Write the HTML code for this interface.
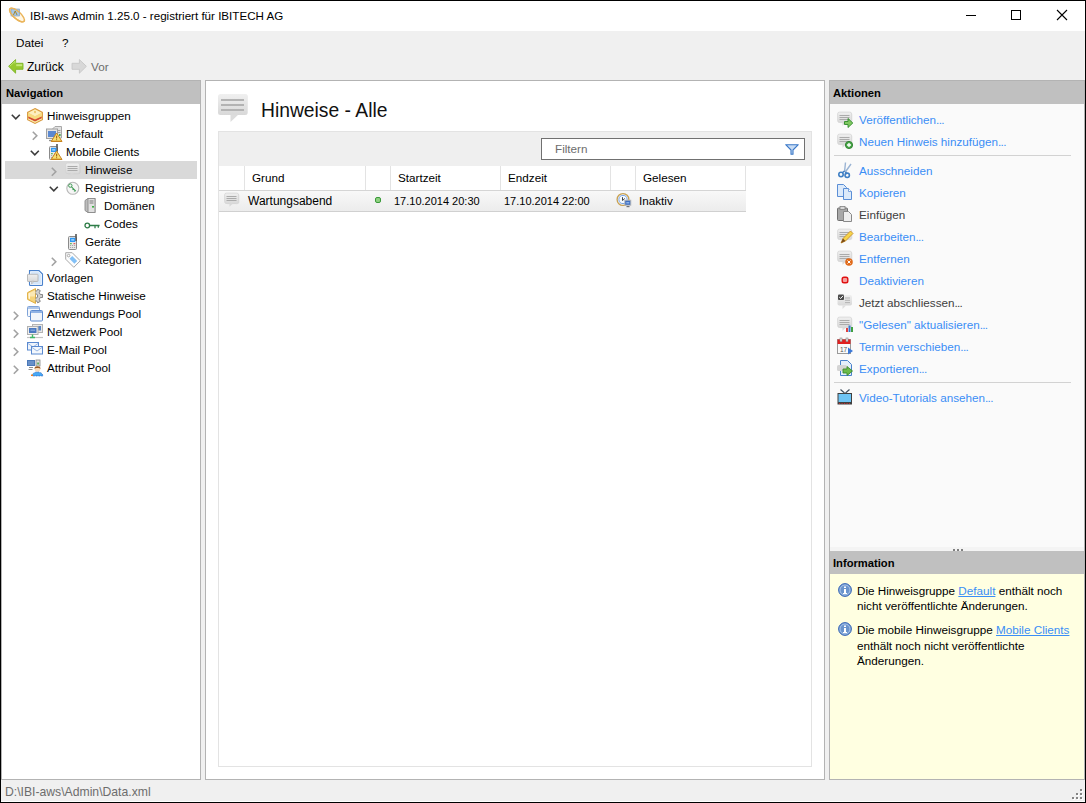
<!DOCTYPE html>
<html><head><meta charset="utf-8">
<style>
*{margin:0;padding:0;box-sizing:border-box}
html,body{width:1086px;height:803px;overflow:hidden;background:#f0f0f0;font-family:"Liberation Sans",sans-serif;font-size:12px;color:#000}
.a{position:absolute;white-space:nowrap}
.t{position:absolute;white-space:nowrap;line-height:14px;font-size:11.7px}
svg{position:absolute;overflow:visible}
.hdr{position:absolute;background:#c0c0c0;font-weight:bold;font-size:11.2px;line-height:14px;color:#000}
.lk{color:#3a8ef6}
.ln{position:absolute;background:#d5d5d5}
</style></head><body>
<svg style="left:0;top:0" width="0" height="0"><defs>
<linearGradient id="gbub" x1="0" y1="0" x2="0" y2="1"><stop offset="0" stop-color="#f0f0f0"/><stop offset="1" stop-color="#d8d8d8"/></linearGradient>
<linearGradient id="ginfo" x1="0" y1="0" x2="0" y2="1"><stop offset="0" stop-color="#a8c4ec"/><stop offset="1" stop-color="#5a86c8"/></linearGradient>
<linearGradient id="grow" x1="0" y1="0" x2="0" y2="1"><stop offset="0" stop-color="#f6f6f6"/><stop offset="1" stop-color="#e6e6e6"/></linearGradient>
</defs></svg>

<div class="a" style="left:0;top:0;width:1086px;height:803px;border:1px solid #000"></div>
<div class="a" style="left:1px;top:1px;width:1084px;height:30px;background:#fff"></div>
<svg style="left:8px;top:6px" width="18" height="18" viewBox="0 0 18 18"><ellipse cx="9" cy="9" rx="3.6" ry="9.5" transform="rotate(-48 9 9)" fill="#fff6e4" stroke="#eab45a" stroke-width="1.4"/><rect x="3" y="3" width="8.5" height="7" fill="#a8c8e8" stroke="#7898b8" stroke-width="0.6"/><path d="M5.5 9L7.2 5L9 9" stroke="#a08020" fill="none" stroke-width="0.9"/><ellipse cx="9" cy="9" rx="3.6" ry="9.5" transform="rotate(-48 9 9)" fill="none" stroke="#eab45a" stroke-width="1.4" stroke-dasharray="0 9 40"/></svg>
<div class="t" style="left:30px;top:9px;font-size:11.6px">IBI-aws Admin 1.25.0 - registriert für IBITECH AG</div>
<div class="a" style="left:966px;top:15px;width:10px;height:1px;background:#000"></div>
<div class="a" style="left:1011px;top:10px;width:10px;height:10px;border:1px solid #000"></div>
<svg style="left:1057px;top:10px" width="10" height="10" viewBox="0 0 10 10"><path d="M0 0L10 10M10 0L0 10" stroke="#000" stroke-width="1.1"/></svg>
<div class="t" style="left:16px;top:36px;">Datei</div>
<div class="t" style="left:62px;top:36px;">?</div>
<svg style="left:8px;top:59px" width="16" height="16" viewBox="0 0 16 16"><path d="M0.6 7.3L7.6 0.6V4.3H15V10.3H7.6V14.2Z" fill="#96c82e" stroke="#7cb424" stroke-width="0.9" stroke-linejoin="round"/><path d="M8.2 5.2H14.2V7.2H8.2Z" fill="#c4e878"/><path d="M1.8 7.3L7 2.3V4.5" fill="none" stroke="#c8ec80" stroke-width="0.8"/></svg>
<div class="t" style="left:27px;top:60px;font-size:12px">Zurück</div>
<svg style="left:71px;top:59px" width="16" height="16" viewBox="0 0 16 16"><path d="M15.4 7.3L8.4 0.6V4.3H1V10.3H8.4V14.2Z" fill="#d8d8d8" stroke="#c6c6c6" stroke-width="0.9" stroke-linejoin="round"/></svg>
<div class="t" style="left:91px;top:60px;color:#6d6d6d">Vor</div>
<div class="a" style="left:1px;top:80px;width:200px;height:700px;background:#fff;border:1px solid #b3b3b3"></div>
<div class="hdr" style="left:2px;top:81px;width:198px;height:23px;padding:5px 0 0 4px">Navigation</div>
<svg style="left:11px;top:114px" width="10" height="6" viewBox="0 0 10 6"><path d="M0.8 0.8L4.8 4.8L8.8 0.8" fill="none" stroke="#3c3c3c" stroke-width="1.6"/></svg>
<svg style="left:27px;top:108px" width="16" height="16" viewBox="0 0 16 16"><path d="M8 0.6L15.4 4.4L15.4 11.6L8 15.4L0.6 11.6L0.6 4.4Z" fill="#f6d67a" stroke="#d89a40" stroke-width="1.1"/><path d="M8 1.5L14.6 4.8L8 8.2L1.4 4.8Z" fill="#fdf0c0"/><path d="M1.3 4.9L8 8.3L14.7 4.9L14.7 8.2L8 11.4L1.3 8.2Z" fill="#f7dc80"/><path d="M1.3 8.4L8 11.6L14.7 8.4L14.7 10.3L8 13.5L1.3 10.3Z" fill="#d24a32"/><path d="M1.3 10.5L8 13.7L14.7 10.5L14.7 11.4L8 14.8L1.3 11.4Z" fill="#fbe9b0"/><path d="M8 2.5L9 4L8 5.5L7 4Z" fill="#e8b848"/></svg>
<div class="t" style="left:47px;top:109px;">Hinweisgruppen</div>
<svg style="left:32px;top:131px" width="6" height="10" viewBox="0 0 6 10"><path d="M0.8 0.8L4.8 4.8L0.8 8.8" fill="none" stroke="#a2a2a2" stroke-width="1.6"/></svg>
<svg style="left:46px;top:126px" width="16" height="16" viewBox="0 0 16 16"><path d="M6.5 3L9 0.5H15.5V12H6.5Z" fill="#e2e2e2" stroke="#a8a8a8" stroke-width="1"/><path d="M11.5 4.5h3M11.5 6.5h3" stroke="#9a9a9a" stroke-width="0.9"/><rect x="12.8" y="8" width="2" height="2" rx="1" fill="#3aa040"/><rect x="0.5" y="3" width="11" height="9.5" fill="#e4e4e4" stroke="#a0a0a0"/><rect x="2" y="5" width="8" height="6" fill="#5b88d0"/><path d="M3 14.5h3" stroke="#909090" stroke-width="1.3"/><path d="M10.6 7L16 15.5L5.2 15.5Z" fill="#f8e070" stroke="#c8841e" stroke-width="1" stroke-linejoin="round"/><path d="M5.5 15.3H15.8" stroke="#c8841e" stroke-width="1.2"/><path d="M10.6 9.8v2.6" stroke="#a86818" stroke-width="1.2"/><rect x="10.1" y="13.2" width="1" height="1" fill="#a86818"/></svg>
<div class="t" style="left:66px;top:127px;">Default</div>
<svg style="left:30px;top:150px" width="10" height="6" viewBox="0 0 10 6"><path d="M0.8 0.8L4.8 4.8L8.8 0.8" fill="none" stroke="#3c3c3c" stroke-width="1.6"/></svg>
<svg style="left:46px;top:144px" width="16" height="16" viewBox="0 0 16 16"><rect x="3.5" y="2.5" width="8" height="13" rx="1" fill="#e8e8e8" stroke="#8a8a8a"/><path d="M11 0v7" stroke="#555" stroke-width="1.6"/><rect x="5" y="3.8" width="5.3" height="4.2" fill="#2e98f4"/><rect x="6.2" y="5.2" width="3" height="1.4" fill="#a8d8ff"/><rect x="5" y="9.2" width="1.8" height="1" fill="#40b040"/><rect x="8.5" y="9.2" width="1.8" height="1" fill="#e04040"/><path d="M5 11.5h5.3M5 13.5h5.3" stroke="#a8a8a8" stroke-width="1" stroke-dasharray="1.2 0.8"/><path d="M10.6 7L16 15.5L5.2 15.5Z" fill="#f8e070" stroke="#c8841e" stroke-width="1" stroke-linejoin="round"/><path d="M5.5 15.3H15.8" stroke="#c8841e" stroke-width="1.2"/><path d="M10.6 9.8v2.6" stroke="#a86818" stroke-width="1.2"/><rect x="10.1" y="13.2" width="1" height="1" fill="#a86818"/></svg>
<div class="t" style="left:66px;top:145px;">Mobile Clients</div>
<div class="a" style="left:5px;top:161px;width:192px;height:18px;background:#d9d9d9"></div>
<svg style="left:51px;top:167px" width="6" height="10" viewBox="0 0 6 10"><path d="M0.8 0.8L4.8 4.8L0.8 8.8" fill="none" stroke="#a2a2a2" stroke-width="1.6"/></svg>
<svg style="left:65px;top:162px" width="16" height="16" viewBox="0 0 16 16"><rect x="1.4" y="1.9" width="14" height="10.4" rx="1.8" fill="#000" opacity="0.05"/><rect x="0.6" y="1.1" width="14" height="10.4" rx="1.8" fill="url(#gbub)" stroke="#d2d2d2" stroke-width="0.7"/><path d="M5.5 11.3L5.5 14.8L9 11.3Z" fill="#d8d8d8"/><path d="M2.5 4.5h10M2.5 6.5h10M2.5 8.5h10" stroke="#ababab" stroke-width="1"/></svg>
<div class="t" style="left:85px;top:163px;">Hinweise</div>
<svg style="left:49px;top:186px" width="10" height="6" viewBox="0 0 10 6"><path d="M0.8 0.8L4.8 4.8L8.8 0.8" fill="none" stroke="#3c3c3c" stroke-width="1.6"/></svg>
<svg style="left:65px;top:180px" width="16" height="16" viewBox="0 0 16 16"><circle cx="7.8" cy="8.3" r="6" fill="#f6f6f6" stroke="#b8b8b8" stroke-width="1.1"/><circle cx="5.3" cy="5.6" r="1.7" fill="none" stroke="#3f9a55" stroke-width="1"/><path d="M6.5 6.8L10.8 11.1M8.6 8.9L7.6 9.9M10 10.3L9 11.3" stroke="#3f9a55" stroke-width="1.1"/></svg>
<div class="t" style="left:85px;top:181px;">Registrierung</div>
<svg style="left:84px;top:198px" width="16" height="16" viewBox="0 0 16 16"><path d="M1 2.5L4 0.5L11 0.5L11 14.5L4 14.5L1 12.5Z" fill="#bdbdbd" stroke="#8a8a8a" stroke-width="0.9"/><rect x="4" y="0.5" width="7" height="14" fill="#e0e0e0" stroke="#8a8a8a" stroke-width="0.9"/><path d="M5.5 3h4M5.5 5h4" stroke="#7a7a7a" stroke-width="1"/><rect x="8" y="8" width="2" height="1.6" fill="#3cb040"/></svg>
<div class="t" style="left:104px;top:199px;">Domänen</div>
<svg style="left:84px;top:216px" width="16" height="16" viewBox="0 0 16 16"><circle cx="3.3" cy="9.5" r="2.3" fill="none" stroke="#2f7d48" stroke-width="1.3"/><path d="M5.6 9.5h10M11 9.5v2.8M14.3 9.5v2.3" stroke="#2f7d48" stroke-width="1.3"/></svg>
<div class="t" style="left:104px;top:217px;">Codes</div>
<svg style="left:65px;top:234px" width="16" height="16" viewBox="0 0 16 16"><rect x="3.5" y="2.5" width="8" height="13" rx="1" fill="#e8e8e8" stroke="#8a8a8a"/><path d="M11 0v7" stroke="#555" stroke-width="1.6"/><rect x="5" y="3.8" width="5.3" height="4.2" fill="#2e98f4"/><rect x="6.2" y="5.2" width="3" height="1.4" fill="#a8d8ff"/><rect x="5" y="9.2" width="1.8" height="1" fill="#40b040"/><rect x="8.5" y="9.2" width="1.8" height="1" fill="#e04040"/><path d="M5 11.5h5.3M5 13.5h5.3" stroke="#a8a8a8" stroke-width="1" stroke-dasharray="1.2 0.8"/></svg>
<div class="t" style="left:85px;top:235px;">Geräte</div>
<svg style="left:51px;top:257px" width="6" height="10" viewBox="0 0 6 10"><path d="M0.8 0.8L4.8 4.8L0.8 8.8" fill="none" stroke="#a2a2a2" stroke-width="1.6"/></svg>
<svg style="left:65px;top:252px" width="16" height="16" viewBox="0 0 16 16"><path d="M0.7 0.7H7.2L15.3 8.8L8.8 15.3L0.7 7.2Z" fill="#fdfdfd" stroke="#a8a8a8" stroke-width="1"/><path d="M4.5 6.8L7.3 4L12.2 8.9L9.4 11.7Z" fill="#82c0f6"/><circle cx="3.6" cy="3.6" r="1.3" fill="#fff" stroke="#a0a0a0" stroke-width="0.9"/></svg>
<div class="t" style="left:85px;top:253px;">Kategorien</div>
<svg style="left:27px;top:270px" width="16" height="16" viewBox="0 0 16 16"><path d="M2.5 0.6h9.5l3.5 3.5v10.3a1 1 0 0 1-1 1h-11a1 1 0 0 1-1-1Z" fill="#d4e6fa" stroke="#4a82cc" stroke-width="1.1"/><path d="M3.6 1.7h8l2.8 2.8v10H3.6Z" fill="none" stroke="#f4f8fe" stroke-width="0.8"/><rect x="0.5" y="4.3" width="10.5" height="7.2" rx="0.6" fill="url(#gbub)" stroke="#b4b4b4" stroke-width="0.9"/><path d="M4.6 11.2v2.9l2.6-2.9Z" fill="#dcdcdc" stroke="#b4b4b4" stroke-width="0.6"/></svg>
<div class="t" style="left:47px;top:271px;">Vorlagen</div>
<svg style="left:27px;top:288px" width="16" height="16" viewBox="0 0 16 16"><path d="M0.6 4.6L8.5 0.6L8.5 15.4L0.6 11.4Z" fill="#f6d47c" stroke="#e0ae40" stroke-width="1"/><path d="M1.6 5.2L8 2.2L8 8.5L1.6 8.5Z" fill="#fbe8b4"/><path d="M1.6 5.5L3 5L3 11L1.6 10.6Z" fill="#fff6dc"/><clipPath id="gclip"><rect x="8.5" y="0" width="8" height="16"/></clipPath><path clip-path="url(#gclip)" fill-rule="evenodd" d="M13.26 6.45L15.54 6.50L15.54 9.50L13.26 9.55L12.22 11.35L13.32 13.35L10.72 14.85L9.54 12.89L7.46 12.89L6.28 14.85L3.68 13.35L4.78 11.35L3.74 9.55L1.46 9.50L1.46 6.50L3.74 6.45L4.78 4.65L3.68 2.65L6.28 1.15L7.46 3.11L9.54 3.11L10.72 1.15L13.32 2.65L12.22 4.65ZM10.7 8.0A2.2 2.2 0 1 0 6.3 8.0A2.2 2.2 0 1 0 10.7 8.0Z" fill="#d0d0d0" stroke="#7a7a7a" stroke-width="0.9"/></svg>
<div class="t" style="left:47px;top:289px;">Statische Hinweise</div>
<svg style="left:13px;top:311px" width="6" height="10" viewBox="0 0 6 10"><path d="M0.8 0.8L4.8 4.8L0.8 8.8" fill="none" stroke="#a2a2a2" stroke-width="1.6"/></svg>
<svg style="left:27px;top:306px" width="16" height="16" viewBox="0 0 16 16"><rect x="0.5" y="0.5" width="12" height="10" rx="1" fill="#f4f7fc" stroke="#7ea3d8" stroke-width="1"/><rect x="1" y="1" width="11" height="2" fill="#aec6ea"/><rect x="3.5" y="4.5" width="12" height="10.5" rx="1" fill="#f0f4fa" stroke="#5d8bd0" stroke-width="1"/><rect x="4" y="5" width="11" height="2" fill="#90b2e4"/></svg>
<div class="t" style="left:47px;top:307px;">Anwendungs Pool</div>
<svg style="left:13px;top:329px" width="6" height="10" viewBox="0 0 6 10"><path d="M0.8 0.8L4.8 4.8L0.8 8.8" fill="none" stroke="#a2a2a2" stroke-width="1.6"/></svg>
<svg style="left:27px;top:324px" width="16" height="16" viewBox="0 0 16 16"><rect x="5.5" y="0.5" width="10" height="8" fill="#e8e8e8" stroke="#b4b4b4"/><rect x="8.5" y="2" width="5.5" height="4.5" fill="#5a86c6"/><rect x="0.5" y="2.5" width="10.5" height="8" fill="#eeeeee" stroke="#b0b0b0"/><rect x="2" y="4" width="7.5" height="5" fill="#4a78c0"/><rect x="3.5" y="5.5" width="4.5" height="1.5" fill="#7aa0d8"/><path d="M0 13.5h16" stroke="#c4c4c4" stroke-width="1.2"/><path d="M5.5 10.5v3M3 13.5h5" stroke="#40b868" stroke-width="1.4"/></svg>
<div class="t" style="left:47px;top:325px;">Netzwerk Pool</div>
<svg style="left:13px;top:347px" width="6" height="10" viewBox="0 0 6 10"><path d="M0.8 0.8L4.8 4.8L0.8 8.8" fill="none" stroke="#a2a2a2" stroke-width="1.6"/></svg>
<svg style="left:27px;top:342px" width="16" height="16" viewBox="0 0 16 16"><rect x="0.5" y="0.5" width="11" height="7.5" fill="#f0f5fc" stroke="#5b8ad0"/><path d="M1 1.5L6 5L11 1.5" fill="none" stroke="#9ab8e4"/><rect x="4.5" y="4.5" width="11" height="7.5" fill="#f4f8fd" stroke="#5b8ad0"/><path d="M5 5.5L10 9L15 5.5" fill="none" stroke="#9ab8e4"/></svg>
<div class="t" style="left:47px;top:343px;">E-Mail Pool</div>
<svg style="left:13px;top:365px" width="6" height="10" viewBox="0 0 6 10"><path d="M0.8 0.8L4.8 4.8L0.8 8.8" fill="none" stroke="#a2a2a2" stroke-width="1.6"/></svg>
<svg style="left:27px;top:360px" width="16" height="16" viewBox="0 0 16 16"><rect x="0" y="0" width="8" height="6" fill="#4a78b8"/><rect x="1" y="1" width="6" height="4" fill="#6890c8"/><path d="M2 7.5h4M1.5 9.5h4" stroke="#909090" stroke-width="1"/><rect x="9" y="0" width="4" height="6" fill="#e0e0e0" stroke="#888" stroke-width="0.8"/><rect x="10.3" y="2.5" width="1.5" height="2" fill="#40a040"/><circle cx="10.5" cy="9" r="2.8" fill="#fcdcb8"/><path d="M7.4 8.8C7.2 5.5 13.8 5.5 13.6 8.8C12.5 7.6 8.5 7.6 7.4 8.8Z" fill="#9a5a22"/><path d="M5 16C5.3 13.5 7.5 12 10.5 12C13.5 12 15.7 13.5 16 16Z" fill="#48a8f4" stroke="#2050b0" stroke-width="0.7" stroke-dasharray="0.8 0.8"/><rect x="4" y="14.5" width="2" height="1.5" fill="#f08020"/></svg>
<div class="t" style="left:47px;top:361px;">Attribut Pool</div>
<div class="a" style="left:205px;top:80px;width:620px;height:700px;background:#fff;border:1px solid #b3b3b3"></div>
<svg style="left:218px;top:93px" width="32" height="32" viewBox="0 0 32 32"><rect x="1" y="1" width="29" height="21" rx="3" fill="#000" opacity="0.06"/><rect x="0" y="1" width="29.5" height="21" rx="2.5" fill="url(#gbub)"/><path d="M12.5 21.5L12.5 29L20.5 21.5Z" fill="#dcdcdc"/><path d="M3 7h23M3 12h23M3 17h23" stroke="#b3b3b3" stroke-width="2"/></svg>
<div class="t" style="left:261px;top:100px;font-size:19.3px;line-height:22px;color:#111">Hinweise - Alle</div>
<div class="a" style="left:218px;top:131px;width:594px;height:636px;border:1px solid #e3e3e3;background:#fff"></div>
<div class="a" style="left:219px;top:132px;width:592px;height:34px;background:#efefef"></div>
<div class="a" style="left:541px;top:138px;width:264px;height:22px;border:1px solid #707070;background:#fff"></div>
<div class="t" style="left:555px;top:142px;color:#6d6d6d">Filtern</div>
<svg style="left:785px;top:144px" width="14" height="11" viewBox="0 0 14 11"><path d="M0.7 0.7H13.3L8 6V10.3H6V6Z" fill="#c8dcf4" stroke="#3a78c8" stroke-width="1.1" stroke-linejoin="round"/></svg>
<div class="a" style="left:219px;top:166px;width:527px;height:25px;background:#fff;border-bottom:1px solid #d5d5d5"></div>
<div class="ln" style="left:244px;top:166px;width:1px;height:24px;background:#e3e3e3"></div>
<div class="ln" style="left:365px;top:166px;width:1px;height:24px;background:#e3e3e3"></div>
<div class="ln" style="left:390px;top:166px;width:1px;height:24px;background:#e3e3e3"></div>
<div class="ln" style="left:500px;top:166px;width:1px;height:24px;background:#e3e3e3"></div>
<div class="ln" style="left:610px;top:166px;width:1px;height:24px;background:#e3e3e3"></div>
<div class="ln" style="left:635px;top:166px;width:1px;height:24px;background:#e3e3e3"></div>
<div class="ln" style="left:745px;top:166px;width:1px;height:24px;background:#e3e3e3"></div>
<div class="t" style="left:252px;top:171px;">Grund</div>
<div class="t" style="left:398px;top:171px;">Startzeit</div>
<div class="t" style="left:508px;top:171px;">Endzeit</div>
<div class="t" style="left:643px;top:171px;">Gelesen</div>
<div class="a" style="left:219px;top:191px;width:527px;height:21px;background:linear-gradient(#f8f8f8,#ececec);border-bottom:1px solid #d0d0d0"></div>
<svg style="left:224px;top:192px" width="16" height="16" viewBox="0 0 16 16"><rect x="1.4" y="1.9" width="14" height="10.4" rx="1.8" fill="#000" opacity="0.05"/><rect x="0.6" y="1.1" width="14" height="10.4" rx="1.8" fill="url(#gbub)" stroke="#d2d2d2" stroke-width="0.7"/><path d="M5.5 11.3L5.5 14.8L9 11.3Z" fill="#d8d8d8"/><path d="M2.5 4.5h10M2.5 6.5h10M2.5 8.5h10" stroke="#ababab" stroke-width="1"/></svg>
<div class="a" style="left:375px;top:197px;width:6px;height:6px;border-radius:2px;background:#8ed080;border:1px solid #3a9a3a"></div>
<div class="t" style="left:248px;top:194px;font-size:12px">Wartungsabend</div>
<div class="t" style="left:394px;top:194px;font-size:11px">17.10.2014 20:30</div>
<div class="t" style="left:504px;top:194px;font-size:11px">17.10.2014 22:00</div>
<svg style="left:616px;top:193px" width="16" height="16" viewBox="0 0 16 16"><circle cx="7" cy="6.5" r="5.9" fill="#fafcff" stroke="#c8a050" stroke-width="1.3"/><circle cx="7" cy="6.5" r="4.1" fill="#f4faff" stroke="#6a98e0" stroke-width="0.9"/><path d="M6.5 4.2v3.3l2.3-2" fill="none" stroke="#404040" stroke-width="1"/><rect x="8.8" y="7.2" width="6" height="5" fill="#3f6fc0" stroke="#b8b8b8" stroke-width="0.9"/><rect x="10.3" y="9" width="3" height="1.5" fill="#8ab0e8"/><path d="M10.5 13.6h3" stroke="#707070" stroke-width="1.2"/></svg>
<div class="t" style="left:639px;top:194px;">Inaktiv</div>
<div class="a" style="left:829px;top:80px;width:256px;height:700px;background:#fafafa;border:1px solid #b3b3b3"></div>
<div class="hdr" style="left:830px;top:81px;width:254px;height:23px;padding:5px 0 0 3px">Aktionen</div>
<svg style="left:837px;top:111px" width="16" height="16" viewBox="0 0 16 16"><rect x="1.4" y="1.9" width="14" height="10.4" rx="1.8" fill="#000" opacity="0.05"/><rect x="0.6" y="1.1" width="14" height="10.4" rx="1.8" fill="url(#gbub)" stroke="#d2d2d2" stroke-width="0.7"/><path d="M5.5 11.3L5.5 14.8L9 11.3Z" fill="#d8d8d8"/><path d="M2.5 4.5h10M2.5 6.5h10M2.5 8.5h10" stroke="#ababab" stroke-width="1"/><path d="M7.5 10.5h3.5V7.5L15.8 12l-4.8 4.5v-3H7.5Z" fill="#80c860" stroke="#2e8a2a" stroke-width="0.9" stroke-linejoin="round"/></svg>
<div class="t" style="left:859px;top:113px;color:#3a8ef6">Veröffentlichen<span style="letter-spacing:-0.7px">...</span></div>
<svg style="left:837px;top:133px" width="16" height="16" viewBox="0 0 16 16"><rect x="1.4" y="1.9" width="14" height="10.4" rx="1.8" fill="#000" opacity="0.05"/><rect x="0.6" y="1.1" width="14" height="10.4" rx="1.8" fill="url(#gbub)" stroke="#d2d2d2" stroke-width="0.7"/><path d="M5.5 11.3L5.5 14.8L9 11.3Z" fill="#d8d8d8"/><path d="M2.5 4.5h10M2.5 6.5h10M2.5 8.5h10" stroke="#ababab" stroke-width="1"/><circle cx="12" cy="12" r="3.6" fill="#4aaa4a" stroke="#2a7a2a" stroke-width="0.9"/><path d="M12 10v4M10 12h4" stroke="#fff" stroke-width="1.3"/></svg>
<div class="t" style="left:859px;top:135px;color:#3a8ef6">Neuen Hinweis hinzufügen<span style="letter-spacing:-0.7px">...</span></div>
<svg style="left:837px;top:162px" width="16" height="16" viewBox="0 0 16 16"><path d="M8.5 0.5L7.5 10M14 2L8 10.5" stroke="#9ab4d4" stroke-width="1.4"/><path d="M7.5 9L5 11M8.5 10L10 12" stroke="#3f7fc4" stroke-width="1.5"/><circle cx="4" cy="12.5" r="2.2" fill="none" stroke="#3f7fc4" stroke-width="1.6"/><circle cx="10.2" cy="13.3" r="2.2" fill="none" stroke="#3f7fc4" stroke-width="1.6"/></svg>
<div class="t" style="left:859px;top:164px;color:#3a8ef6">Ausschneiden</div>
<svg style="left:837px;top:184px" width="16" height="16" viewBox="0 0 16 16"><path d="M0.5 0.5h6l3 3v9h-9Z" fill="#dceafa" stroke="#5a8ed6"/><path d="M6.5 4.5h5l3 3v8h-8Z" fill="#dceafa" stroke="#5a8ed6"/><path d="M11.5 4.5v3h3" fill="#fff" stroke="#5a8ed6" stroke-width="0.8"/></svg>
<div class="t" style="left:859px;top:186px;color:#3a8ef6">Kopieren</div>
<svg style="left:837px;top:206px" width="16" height="16" viewBox="0 0 16 16"><rect x="0.5" y="2" width="10" height="12.5" rx="1" fill="#a8a8a8" stroke="#707070"/><rect x="3" y="0.5" width="5" height="3" fill="#d8d8d8" stroke="#808080" stroke-width="0.8"/><path d="M6.5 5.5h5l3 3v7h-8Z" fill="#eeeeee" stroke="#888"/></svg>
<div class="t" style="left:859px;top:208px;color:#404040">Einfügen</div>
<svg style="left:837px;top:228px" width="16" height="16" viewBox="0 0 16 16"><rect x="1.4" y="1.9" width="14" height="10.4" rx="1.8" fill="#000" opacity="0.05"/><rect x="0.6" y="1.1" width="14" height="10.4" rx="1.8" fill="url(#gbub)" stroke="#d2d2d2" stroke-width="0.7"/><path d="M5.5 11.3L5.5 14.8L9 11.3Z" fill="#d8d8d8"/><path d="M2.5 4.5h10M2.5 6.5h10M2.5 8.5h10" stroke="#ababab" stroke-width="1"/><path d="M4 15L6 10.5L13.5 3L16 5.5L8.5 13Z" fill="#f6d44a" stroke="#c8902a" stroke-width="0.9"/><path d="M4 15L6 10.5L8.5 13Z" fill="#7a4a1a"/></svg>
<div class="t" style="left:859px;top:230px;color:#3a8ef6">Bearbeiten<span style="letter-spacing:-0.7px">...</span></div>
<svg style="left:837px;top:250px" width="16" height="16" viewBox="0 0 16 16"><rect x="1.4" y="1.9" width="14" height="10.4" rx="1.8" fill="#000" opacity="0.05"/><rect x="0.6" y="1.1" width="14" height="10.4" rx="1.8" fill="url(#gbub)" stroke="#d2d2d2" stroke-width="0.7"/><path d="M5.5 11.3L5.5 14.8L9 11.3Z" fill="#d8d8d8"/><path d="M2.5 4.5h10M2.5 6.5h10M2.5 8.5h10" stroke="#ababab" stroke-width="1"/><circle cx="12" cy="12" r="3.8" fill="#e06a1a"/><path d="M10.5 10.5l3 3M13.5 10.5l-3 3" stroke="#fff" stroke-width="1"/></svg>
<div class="t" style="left:859px;top:252px;color:#3a8ef6">Entfernen</div>
<svg style="left:837px;top:272px" width="16" height="16" viewBox="0 0 16 16"><rect x="5.2" y="5.2" width="5.6" height="5.6" rx="1.8" fill="#f4a0a0" stroke="#e01010" stroke-width="1.4"/></svg>
<div class="t" style="left:859px;top:274px;color:#3a8ef6">Deaktivieren</div>
<svg style="left:837px;top:294px" width="16" height="16" viewBox="0 0 16 16"><rect x="0.5" y="1" width="14.5" height="10.5" rx="1.8" fill="url(#gbub)"/><path d="M5.5 11.5L5.5 15L9 11.5Z" fill="#dedede"/><path d="M8 4h5M8 6.3h5M8 8.6h5" stroke="#b3b3b3" stroke-width="1"/><rect x="1" y="0.5" width="6" height="5.5" rx="1" fill="#4a4a4a"/><path d="M2.3 3.2L3.7 4.5L6 1.8" fill="none" stroke="#fff" stroke-width="1"/></svg>
<div class="t" style="left:859px;top:296px;color:#404040">Jetzt abschliessen<span style="letter-spacing:-0.7px">...</span></div>
<svg style="left:837px;top:316px" width="16" height="16" viewBox="0 0 16 16"><rect x="1.4" y="1.9" width="14" height="10.4" rx="1.8" fill="#000" opacity="0.05"/><rect x="0.6" y="1.1" width="14" height="10.4" rx="1.8" fill="url(#gbub)" stroke="#d2d2d2" stroke-width="0.7"/><path d="M5.5 11.3L5.5 14.8L9 11.3Z" fill="#d8d8d8"/><path d="M2.5 4.5h10M2.5 6.5h10M2.5 8.5h10" stroke="#ababab" stroke-width="1"/><rect x="9" y="12" width="2" height="4" fill="#e04040"/><rect x="11.5" y="9.5" width="2" height="6.5" fill="#3a7ad0"/><rect x="14" y="11" width="2" height="5" fill="#40a040"/></svg>
<div class="t" style="left:859px;top:318px;color:#3a8ef6">"Gelesen" aktualisieren<span style="letter-spacing:-0.7px">...</span></div>
<svg style="left:837px;top:338px" width="16" height="16" viewBox="0 0 16 16"><rect x="0.5" y="1.5" width="13" height="14" fill="#fafafa" stroke="#9a9a9a"/><rect x="0.5" y="1.5" width="13" height="4.5" fill="#e02020"/><rect x="3" y="0" width="2" height="3.5" fill="#e8e8e8" stroke="#888" stroke-width="0.6"/><rect x="9" y="0" width="2" height="3.5" fill="#e8e8e8" stroke="#888" stroke-width="0.6"/><text x="3" y="13.5" font-size="6.5" font-family="Liberation Sans" fill="#555">17</text><path d="M11 9.5L16 13L11 16.5Z" fill="#3a78d8"/></svg>
<div class="t" style="left:859px;top:340px;color:#3a8ef6">Termin verschieben<span style="letter-spacing:-0.7px">...</span></div>
<svg style="left:837px;top:360px" width="16" height="16" viewBox="0 0 16 16"><path d="M3.5 0.5h7l4 4v11h-11Z" fill="#e4eefa" stroke="#4a82cc"/><rect x="0" y="5" width="10" height="6" rx="1.5" fill="#d4d4d4"/><path d="M6 9h4V6.5L15.5 11 10 15.5V13H6Z" fill="#6cba4a" stroke="#3a8a2a" stroke-width="0.9"/></svg>
<div class="t" style="left:859px;top:362px;color:#3a8ef6">Exportieren<span style="letter-spacing:-0.7px">...</span></div>
<svg style="left:837px;top:389px" width="16" height="16" viewBox="0 0 16 16"><path d="M3.5 0.5L7.5 4M12.5 0.5L8.5 4" stroke="#405060" stroke-width="1.2"/><rect x="0.5" y="4" width="14.5" height="11.5" fill="#404040"/><rect x="1.5" y="5" width="12.5" height="8" fill="#6ec4f4"/><path d="M2 14.5h11" stroke="#c03030" stroke-width="1" stroke-dasharray="1.2 1.3"/></svg>
<div class="t" style="left:859px;top:391px;color:#3a8ef6">Video-Tutorials ansehen<span style="letter-spacing:-0.7px">...</span></div>
<div class="ln" style="left:834px;top:155px;width:237px;height:1px;background:#d2d2d2"></div>
<div class="ln" style="left:834px;top:382px;width:237px;height:1px;background:#d2d2d2"></div>
<div class="a" style="left:830px;top:547px;width:254px;height:4px;background:#f4f4f4"></div>
<div class="a" style="left:953px;top:549px;width:2px;height:2px;background:#808080"></div>
<div class="a" style="left:957px;top:549px;width:2px;height:2px;background:#808080"></div>
<div class="a" style="left:961px;top:549px;width:2px;height:2px;background:#808080"></div>
<div class="hdr" style="left:830px;top:551px;width:254px;height:23px;padding:5px 0 0 3px">Information</div>
<div class="a" style="left:830px;top:574px;width:254px;height:205px;background:#ffffe1"></div>
<svg style="left:838px;top:583px" width="15" height="15" viewBox="0 0 15 15"><circle cx="7" cy="7" r="6.4" fill="#6a94cc" stroke="#3a68b8" stroke-width="1"/><circle cx="7" cy="7" r="5" fill="none" stroke="#b0caec" stroke-width="0.9"/><rect x="6" y="3.5" width="2" height="1.5" fill="#fff"/><path d="M6 6h2v4h1v1h-4v-1h1Z" fill="#fff"/></svg>
<div class="t" style="left:857px;top:584px;">Die Hinweisgruppe <span style="color:#3a8ef6;text-decoration:underline">Default</span> enthält noch</div>
<div class="t" style="left:857px;top:599px;">nicht veröffentlichte Änderungen.</div>
<svg style="left:838px;top:622px" width="15" height="15" viewBox="0 0 15 15"><circle cx="7" cy="7" r="6.4" fill="#6a94cc" stroke="#3a68b8" stroke-width="1"/><circle cx="7" cy="7" r="5" fill="none" stroke="#b0caec" stroke-width="0.9"/><rect x="6" y="3.5" width="2" height="1.5" fill="#fff"/><path d="M6 6h2v4h1v1h-4v-1h1Z" fill="#fff"/></svg>
<div class="t" style="left:857px;top:623px;">Die mobile Hinweisgruppe <span style="color:#3a8ef6;text-decoration:underline">Mobile Clients</span></div>
<div class="t" style="left:857px;top:639px;">enthält noch nicht veröffentlichte</div>
<div class="t" style="left:857px;top:654px;">Änderungen.</div>
<div class="t" style="left:5px;top:785px;color:#6d6d6d;font-size:12.2px">D:\IBI-aws\Admin\Data.xml</div>
<div class="a" style="left:1px;top:801px;width:1084px;height:1px;background:#fff"></div>
<div class="a" style="left:1081px;top:790px;width:2px;height:2px;background:#fff"></div>
<div class="a" style="left:1080px;top:789px;width:2px;height:2px;background:#858585"></div>
<div class="a" style="left:1077px;top:794px;width:2px;height:2px;background:#fff"></div>
<div class="a" style="left:1076px;top:793px;width:2px;height:2px;background:#858585"></div>
<div class="a" style="left:1081px;top:794px;width:2px;height:2px;background:#fff"></div>
<div class="a" style="left:1080px;top:793px;width:2px;height:2px;background:#858585"></div>
<div class="a" style="left:1073px;top:798px;width:2px;height:2px;background:#fff"></div>
<div class="a" style="left:1072px;top:797px;width:2px;height:2px;background:#858585"></div>
<div class="a" style="left:1077px;top:798px;width:2px;height:2px;background:#fff"></div>
<div class="a" style="left:1076px;top:797px;width:2px;height:2px;background:#858585"></div>
<div class="a" style="left:1081px;top:798px;width:2px;height:2px;background:#fff"></div>
<div class="a" style="left:1080px;top:797px;width:2px;height:2px;background:#858585"></div>
</body></html>
